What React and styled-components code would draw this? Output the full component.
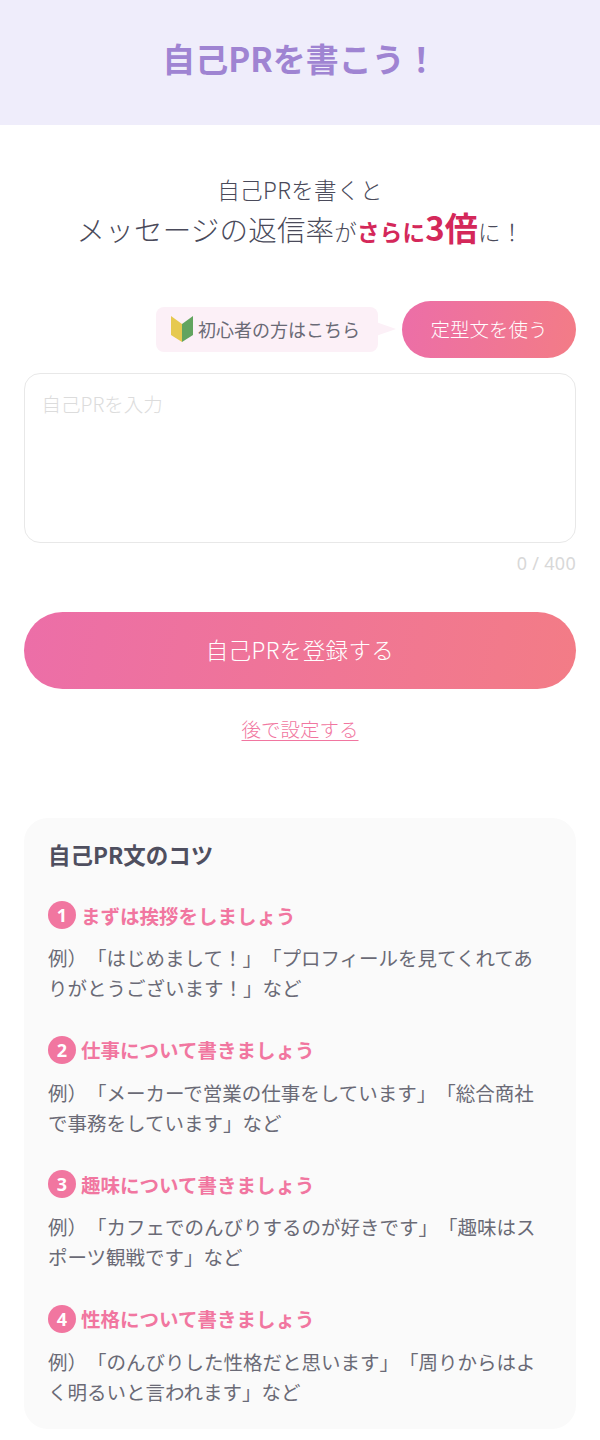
import React from "react"
import styled, { createGlobalStyle } from "styled-components"

const GlobalStyle = createGlobalStyle`
  html, body {
    margin: 0;
    padding: 0;
    background: #ffffff;
  }
  body {
    font-family: "Noto Sans CJK JP", "Noto Sans", sans-serif;
    color: #4f4f5f;
    text-spacing-trim: space-all;
  }
  * {
    box-sizing: border-box;
  }
`

const PINK_GRADIENT = "linear-gradient(100deg, #ec6ea8 0%, #f37c86 100%)"

const Page = styled.div`
  width: 600px;
  height: 1440px;
  overflow: hidden;
`

const Header = styled.header`
  height: 125px;
  padding-bottom: 9px;
  background: #efedfb;
  display: flex;
  align-items: center;
  justify-content: center;
  h1 {
    margin: 0;
    color: #9f84d2;
    font-size: 33px;
    line-height: 44px;
    font-weight: 700;
  }
`

const Lead = styled.section`
  padding-top: 47px;
  text-align: center;
  font-weight: 300;
  color: #4a4a5a;
`

const LeadSmall = styled.p`
  margin: 0;
  font-size: 22.5px;
  line-height: 34px;
  letter-spacing: 0.4px;
`

const LeadBig = styled.p`
  margin: 0;
  font-size: 28.5px;
  line-height: 43px;
  letter-spacing: 0.2px;
  small {
    font-size: 22.5px;
  }
  strong {
    color: #d4285a;
    font-weight: 700;
    font-size: 22.5px;
  }
  strong b {
    font-size: 33px;
    font-weight: 700;
  }
`

const Form = styled.section`
  padding: 48px 24px 0;
`

const TemplateRow = styled.div`
  display: flex;
  justify-content: flex-end;
  align-items: center;
  gap: 24px;
`

const Bubble = styled.div`
  position: relative;
  height: 45px;
  padding: 0 18px 2px 15px;
  display: flex;
  align-items: center;
  gap: 5px;
  background: #fcf0f7;
  border-radius: 8px;
  font-size: 18px;
  color: #6a6a76;
  font-weight: 400;
  &::after {
    content: "";
    position: absolute;
    right: -18px;
    top: 15px;
    border-left: 20px solid #fcf0f7;
    border-top: 7px solid transparent;
    border-bottom: 7px solid transparent;
  }
`

const TemplateButton = styled.button`
  width: 174px;
  height: 57px;
  padding: 0 0 2px;
  border: none;
  border-radius: 29px;
  background: ${PINK_GRADIENT};
  color: #ffffff;
  font-family: inherit;
  font-size: 19.5px;
  font-weight: 300;
`

const TextBox = styled.div`
  margin-top: 15px;
  height: 170px;
  padding: 15px 16.5px;
  border: 1.5px solid #e8e8e8;
  border-radius: 16px;
  color: #dcdcdc;
  font-size: 19.5px;
  line-height: 30px;
  font-weight: 300;
`

const Counter = styled.div`
  margin-top: 6px;
  text-align: right;
  color: #d8d8d8;
  font-family: "Noto Sans", sans-serif;
  font-size: 18px;
  line-height: 28px;
  letter-spacing: 0.3px;
`

const SubmitButton = styled.button`
  display: block;
  width: 100%;
  margin-top: 35px;
  height: 77px;
  padding: 0 0 4px;
  border: none;
  border-radius: 39px;
  background: ${PINK_GRADIENT};
  color: #ffffff;
  font-family: inherit;
  font-size: 22.5px;
  font-weight: 300;
  letter-spacing: 0.4px;
`

const LaterLink = styled.a`
  display: block;
  margin-top: 25px;
  text-align: center;
  color: #f176a0;
  font-size: 19.5px;
  line-height: 30px;
  font-weight: 300;
  text-decoration: underline;
  text-underline-offset: 3px;
`

const TipsCard = styled.section`
  margin: 74px 24px 0;
  padding: 18px 24px 0;
  height: 611px;
  background: #fafafa;
  border-radius: 24px;
  h2 {
    margin: 0;
    font-size: 22.5px;
    line-height: 36px;
    font-weight: 700;
    color: #4f4f5f;
  }
`

const Tip = styled.div`
  margin-top: 28px;
  & + & {
    margin-top: 31.5px;
  }
`

const TipHead = styled.div`
  display: flex;
  align-items: center;
  gap: 5px;
  height: 30px;
  color: #f176a0;
  font-size: 19.5px;
  font-weight: 700;
`

const TipNum = styled.span`
  width: 28px;
  height: 28px;
  border-radius: 50%;
  background: #f176a0;
  color: #ffffff;
  font-family: "Noto Sans", sans-serif;
  font-size: 18px;
  font-weight: 700;
  display: flex;
  align-items: center;
  justify-content: center;
`

const TipBody = styled.p`
  margin: 13px 0 0;
  font-size: 19.5px;
  line-height: 30px;
  font-weight: 400;
  color: #6a6a76;
`

const Beginner = () => (
  <svg width="22" height="28" viewBox="0 0 22 28">
    <path d="M0 1 L11 9 V27 L0 20 Z" fill="#e6c94f" />
    <path d="M22 1 L11 9 V27 L22 20 Z" fill="#62a45f" />
  </svg>
)

const tips = [
  {
    title: "まずは挨拶をしましょう",
    body: "例）「はじめまして！」「プロフィールを見てくれてありがとうございます！」など",
  },
  {
    title: "仕事について書きましょう",
    body: "例）「メーカーで営業の仕事をしています」「総合商社で事務をしています」など",
  },
  {
    title: "趣味について書きましょう",
    body: "例）「カフェでのんびりするのが好きです」「趣味はスポーツ観戦です」など",
  },
  {
    title: "性格について書きましょう",
    body: "例）「のんびりした性格だと思います」「周りからはよく明るいと言われます」など",
  },
]

const App = () => (
  <Page>
    <GlobalStyle />
    <Header>
      <h1>自己PRを書こう！</h1>
    </Header>
    <Lead>
      <LeadSmall>自己PRを書くと</LeadSmall>
      <LeadBig>
        メッセージの返信率<small>が</small>
        <strong>
          さらに<b>3倍</b>
        </strong>
        <small>に！</small>
      </LeadBig>
    </Lead>
    <Form>
      <TemplateRow>
        <Bubble>
          <Beginner />
          初心者の方はこちら
        </Bubble>
        <TemplateButton>定型文を使う</TemplateButton>
      </TemplateRow>
      <TextBox>自己PRを入力</TextBox>
      <Counter>0 / 400</Counter>
      <SubmitButton>自己PRを登録する</SubmitButton>
      <LaterLink>後で設定する</LaterLink>
    </Form>
    <TipsCard>
      <h2>自己PR文のコツ</h2>
      {tips.map((tip, i) => (
        <Tip key={tip.title}>
          <TipHead>
            <TipNum>{i + 1}</TipNum>
            {tip.title}
          </TipHead>
          <TipBody>{tip.body}</TipBody>
        </Tip>
      ))}
    </TipsCard>
  </Page>
)

export default App
